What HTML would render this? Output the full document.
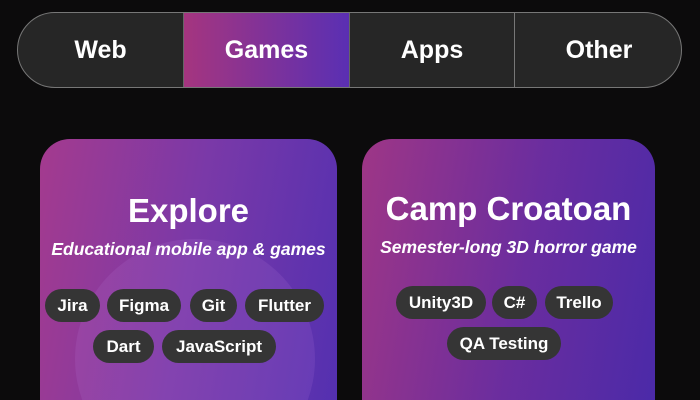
<!DOCTYPE html>
<html><head><style>
*{margin:0;padding:0;box-sizing:border-box}
html,body{width:700px;height:400px;overflow:hidden}
body{background:#0c0b0c;position:relative;font-family:"Liberation Sans",sans-serif;color:#fff}
.nav{position:absolute;left:17px;top:12px;width:665px;height:76px;border:1.5px solid #777;border-radius:38px;background:#262626;overflow:hidden}
.seg{position:absolute;top:0;height:100%;display:flex;align-items:center;justify-content:center;font-weight:bold;font-size:25px}
.card{position:absolute;top:139px;height:261px;border-radius:30px 30px 0 0;overflow:hidden;text-align:center}
.c1{left:40px;width:297px;background:linear-gradient(100deg,#a43a8e 0%,#7a39a8 50%,#5430b0 100%)}
.c2{left:362px;width:293px;background:linear-gradient(100deg,#9e3686 0%,#6a2d9f 55%,#4b2aa8 100%)}
.t{position:absolute;left:0;right:0;font-weight:bold;font-size:33px}
.s{position:absolute;left:0;right:0;font-style:italic;font-weight:bold;font-size:17.5px}
.chip{position:absolute;height:33px;border-radius:17px;background:#353535;display:flex;align-items:center;justify-content:center;font-weight:bold;font-size:17px}
</style></head><body>
<div class="nav">
<div class="seg" style="left:0;width:165px">Web</div>
<div class="seg" style="left:165px;width:167px;background:linear-gradient(90deg,#a5357f,#5a2fb3);border-left:1px solid #666;border-right:1px solid #666">Games</div>
<div class="seg" style="left:332px;width:165px;border-right:1.5px solid #777">Apps</div>
<div class="seg" style="left:497px;width:168px">Other</div>
</div>
<div class="card c1">
<div style="position:absolute;left:35px;top:100px;width:240px;height:240px;border-radius:50%;background:rgba(190,130,220,.15)"></div>
<div class="t" style="top:53px">Explore</div>
<div class="s" style="top:100px">Educational mobile app &amp; games</div>
<div class="chip" style="left:5px;top:150px;width:55px">Jira</div>
<div class="chip" style="left:67px;top:150px;width:74px">Figma</div>
<div class="chip" style="left:150px;top:150px;width:47px">Git</div>
<div class="chip" style="left:205px;top:150px;width:79px">Flutter</div>
<div class="chip" style="left:53px;top:191px;width:61px">Dart</div>
<div class="chip" style="left:122px;top:191px;width:114px">JavaScript</div>
</div>
<div class="card c2">
<div class="t" style="top:51px">Camp Croatoan</div>
<div class="s" style="top:98px">Semester-long 3D horror game</div>
<div class="chip" style="left:34px;top:147px;width:90px">Unity3D</div>
<div class="chip" style="left:130px;top:147px;width:45px">C#</div>
<div class="chip" style="left:183px;top:147px;width:68px">Trello</div>
<div class="chip" style="left:85px;top:188px;width:114px">QA Testing</div>
</div>
</body></html>
